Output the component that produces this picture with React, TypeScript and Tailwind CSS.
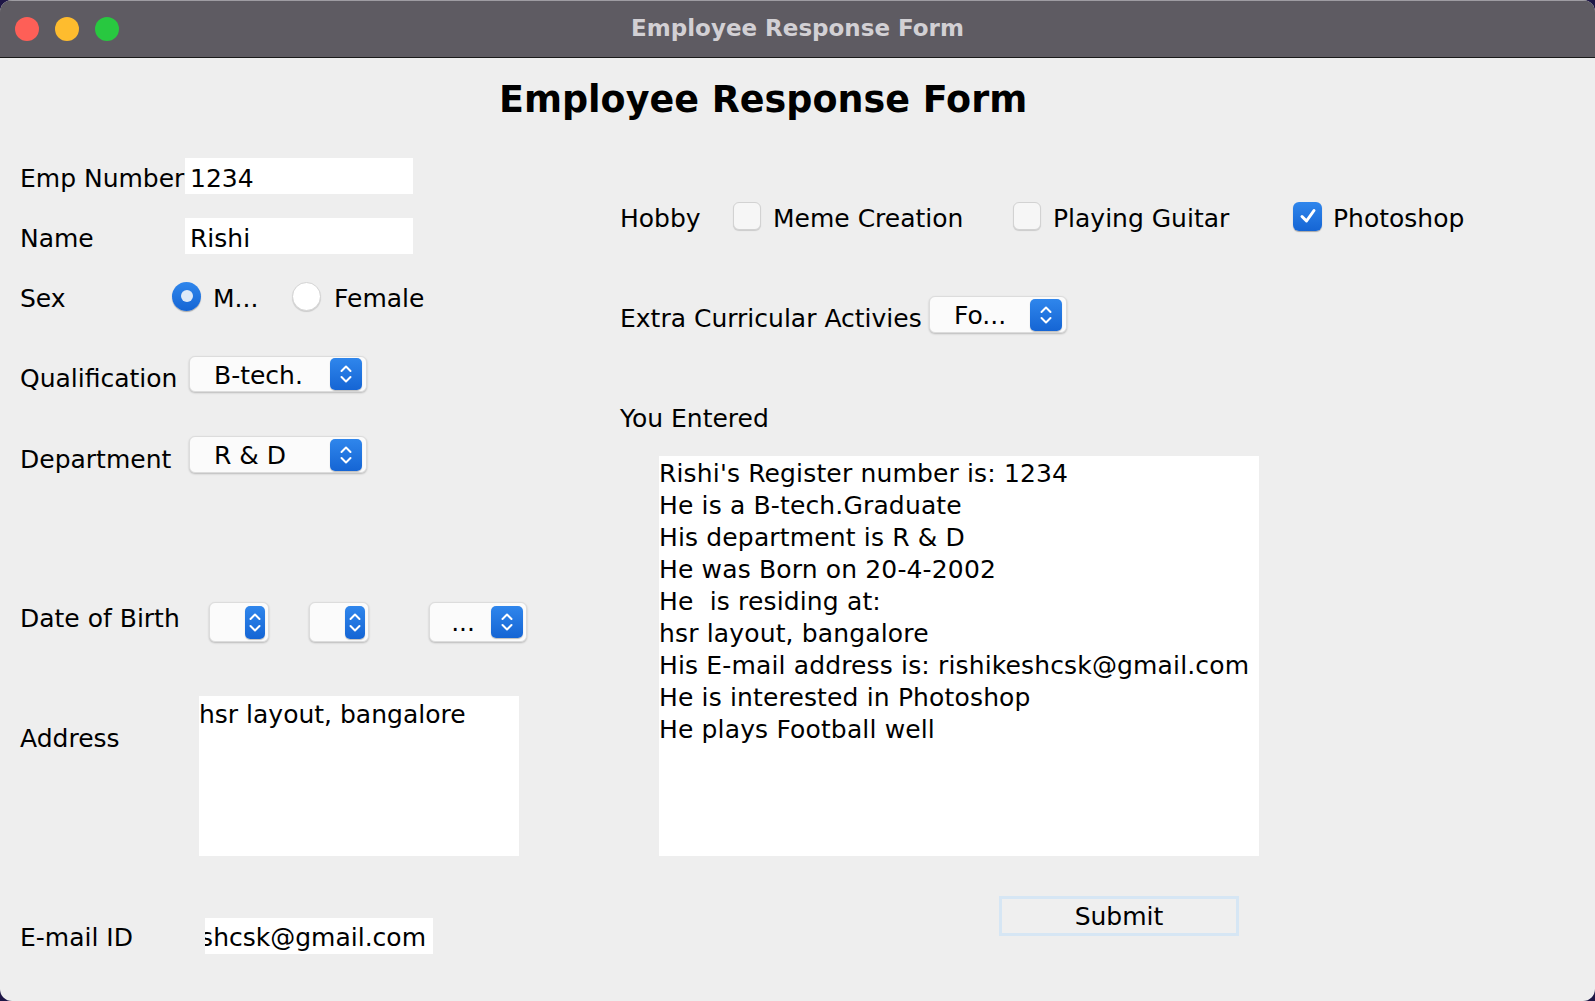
import React from "react";

const font = { fontFamily: '"DejaVu Sans", "Noto Sans", sans-serif' };

function Stepper({ narrow = false }: { narrow?: boolean }) {
  const w = narrow ? 20 : 32;
  const c = w / 2;
  return (
    <div
      className={`${narrow ? "w-[20px] h-[33px]" : "w-[32px] h-[32px]"} rounded-[5px] bg-gradient-to-b from-[#2f86ec] to-[#1565d4] shadow-[0_1px_1px_rgba(0,0,0,0.25)] flex items-center justify-center`}
    >
      <svg width={w} height={narrow ? 33 : 32} viewBox={`0 0 ${w} ${narrow ? 33 : 32}`} fill="none">
        <path d={`M${c - 4.5} 13 L${c} 8.5 L${c + 4.5} 13`} stroke="white" strokeWidth="2" strokeLinecap="round" strokeLinejoin="round" />
        <path d={`M${c - 4.5} ${narrow ? 20 : 19} L${c} ${narrow ? 24.5 : 23.5} L${c + 4.5} ${narrow ? 20 : 19}`} stroke="white" strokeWidth="2" strokeLinecap="round" strokeLinejoin="round" />
      </svg>
    </div>
  );
}

function Combo({ label, w, h = "h-[36px]", pl = "pl-[24px]" }: { label: string; w: string; h?: string; pl?: string }) {
  return (
    <div className={`${w} ${h} ${pl} pr-[4px] flex items-center justify-between rounded-[6px] bg-[#fbfbfb] border border-[#dcdcdc] shadow-[0_1px_2px_rgba(0,0,0,0.22)]`}>
      <span className="text-[25px] leading-none text-black whitespace-nowrap pt-[2px]">{label}</span>
      <Stepper />
    </div>
  );
}

function SmallCombo({ w, narrow, label }: { w: string; narrow?: boolean; label?: string }) {
  return (
    <div className={`${w} h-[40px] pr-[3px] flex items-center justify-end gap-[16px] rounded-[6px] bg-[#fbfbfb] border border-[#dcdcdc] shadow-[0_1px_2px_rgba(0,0,0,0.22)]`}>
      {label && <span className="text-[25px] leading-none text-black">{label}</span>}
      <Stepper narrow={narrow} />
    </div>
  );
}

function Checkbox({ checked = false }: { checked?: boolean }) {
  if (checked) {
    return (
      <div className="w-[29px] h-[29px] rounded-[6px] bg-gradient-to-b from-[#2f86ec] to-[#1565d4] shadow-[0_1px_1px_rgba(0,0,0,0.3)] flex items-center justify-center">
        <svg width="20" height="20" viewBox="0 0 20 20" fill="none">
          <path d="M4 10.5 L8.5 15 L16 4.5" stroke="white" strokeWidth="3" strokeLinecap="round" strokeLinejoin="round" />
        </svg>
      </div>
    );
  }
  return <div className="w-[28px] h-[28px] rounded-[6px] bg-[#f6f6f6] border border-[#d2d2d2] shadow-[0_1px_1px_rgba(0,0,0,0.15)]" />;
}

const outputLines = [
  "Rishi's Register number is: 1234",
  "He is a B-tech.Graduate",
  "His department is R & D",
  "He was Born on 20-4-2002",
  "He\u00a0 is residing at:",
  "hsr layout, bangalore",
  "His E-mail address is: rishikeshcsk@gmail.com",
  "He is interested in Photoshop",
  "He plays Football well",
];

export default function App() {
  return (
    <div className="w-[1595px] h-[1001px] bg-[#1e1646] overflow-hidden" style={font}>
      <div className="w-full h-full rounded-[12px] overflow-hidden bg-[#eeeeee] flex flex-col">
        {/* Title bar */}
        <div className="relative h-[58px] shrink-0 bg-[#5e5b62] border-t border-t-[#9e9ca2] border-b border-b-[#1a1a1a] flex items-center">
          <div className="flex items-center gap-[16px] pl-[15px]">
            <span className="w-[24px] h-[24px] rounded-full bg-[#fe5f57]" />
            <span className="w-[24px] h-[24px] rounded-full bg-[#febc2e]" />
            <span className="w-[24px] h-[24px] rounded-full bg-[#28c840]" />
          </div>
          <div className="absolute inset-0 flex items-center justify-center pb-[2px] text-[23px] font-bold text-[#d2d0d4]">
            Employee Response Form
          </div>
        </div>

        {/* Heading */}
        <h1 className="mt-[19px] h-[46px] leading-[46px] pl-[499px] text-left text-[36.5px] font-bold text-black">
          Employee Response Form
        </h1>

        <div className="flex -mt-[2px] text-[25px] text-black">
          {/* Left column */}
          <div className="w-[620px] pl-[20px] flex flex-col">
            <div className="mt-[37px] h-[36px] flex items-center">
              <span className="w-[165px] pt-[6px] whitespace-nowrap">Emp Number</span>
              <div className="w-[228px] h-[36px] bg-white pl-[5px] pt-[6px] flex items-center">1234</div>
            </div>
            <div className="mt-[24px] h-[36px] flex items-center">
              <span className="w-[165px] pt-[6px]">Name</span>
              <div className="w-[228px] h-[36px] bg-white pl-[5px] pt-[6px] flex items-center">Rishi</div>
            </div>
            <div className="mt-[24px] h-[36px] flex items-center">
              <span className="w-[152px] pt-[6px]">Sex</span>
              <span className="w-[29px] h-[29px] rounded-full bg-gradient-to-b from-[#2f86ec] to-[#1565d4] shadow-[0_1px_1px_rgba(0,0,0,0.3)] flex items-center justify-center">
                <span className="w-[12px] h-[12px] rounded-full bg-[#dde9f8]" />
              </span>
              <span className="ml-[12px] w-[79px] pt-[6px]">M...</span>
              <span className="w-[29px] h-[29px] rounded-full bg-white border border-[#d4d4d4] shadow-[0_1px_1px_rgba(0,0,0,0.15)]" />
              <span className="ml-[13px] pt-[6px]">Female</span>
            </div>
            <div className="mt-[42px] h-[36px] flex items-center">
              <span className="w-[169px] pt-[10px]">Qualification</span>
              <Combo label="B-tech." w="w-[178px]" />
            </div>
            <div className="mt-[44px] h-[37px] flex items-center">
              <span className="w-[169px] pt-[11px]">Department</span>
              <Combo label="R & D" w="w-[178px]" h="h-[37px]" />
            </div>
            <div className="mt-[129px] h-[40px] flex items-center">
              <span className="w-[189px] pb-[6px]">Date of Birth</span>
              <SmallCombo w="w-[60px]" narrow />
              <div className="ml-[40px]">
                <SmallCombo w="w-[60px]" narrow />
              </div>
              <div className="ml-[60px]">
                <SmallCombo w="w-[98px]" label="..." />
              </div>
            </div>
            <div className="mt-[54px] h-[160px] flex items-start">
              <span className="w-[179px] mt-[27px] leading-[32px]">Address</span>
              <div className="w-[320px] h-[160px] bg-white leading-[32px] pt-[3px]">hsr layout, bangalore</div>
            </div>
            <div className="mt-[62px] h-[36px] flex items-center">
              <span className="w-[185px] pt-[4px]">E-mail ID</span>
              <div className="w-[228px] h-[36px] bg-white pr-[7px] pt-[4px] flex items-center justify-end overflow-hidden whitespace-nowrap">
                <span className="shrink-0">rishikeshcsk@gmail.com</span>
              </div>
            </div>
          </div>

          {/* Right column */}
          <div className="flex-1 flex flex-col">
            <div className="mt-[81px] h-[28px] flex items-center">
              <span className="w-[113px] pt-[6px]">Hobby</span>
              <Checkbox />
              <span className="ml-[12px] w-[240px] pt-[6px]">Meme Creation</span>
              <Checkbox />
              <span className="ml-[12px] w-[240px] pt-[6px]">Playing Guitar</span>
              <Checkbox checked />
              <span className="ml-[11px] pt-[6px]">Photoshop</span>
            </div>
            <div className="mt-[66px] h-[37px] flex items-center">
              <span className="w-[309px] pt-[8px] whitespace-nowrap">Extra Curricular Activies</span>
              <Combo label="Fo..." w="w-[138px]" h="h-[37px]" />
            </div>
            <div className="mt-[67px] h-[32px] leading-[32px] pt-[3px]">You Entered</div>
            <div className="mt-[24px] ml-[39px] w-[600px] h-[400px] bg-white leading-[32px] pt-[2px] whitespace-pre overflow-hidden tracking-[0.15px]">
              {outputLines.map((l) => (
                <div key={l}>{l}</div>
              ))}
            </div>
            <div className="mt-[40px] ml-[379px] w-[240px] h-[40px] border-[3px] border-[#d6e6f4] bg-[#efefef] flex items-center justify-center">
              <span className="leading-none">Submit</span>
            </div>
          </div>
        </div>
      </div>
    </div>
  );
}
